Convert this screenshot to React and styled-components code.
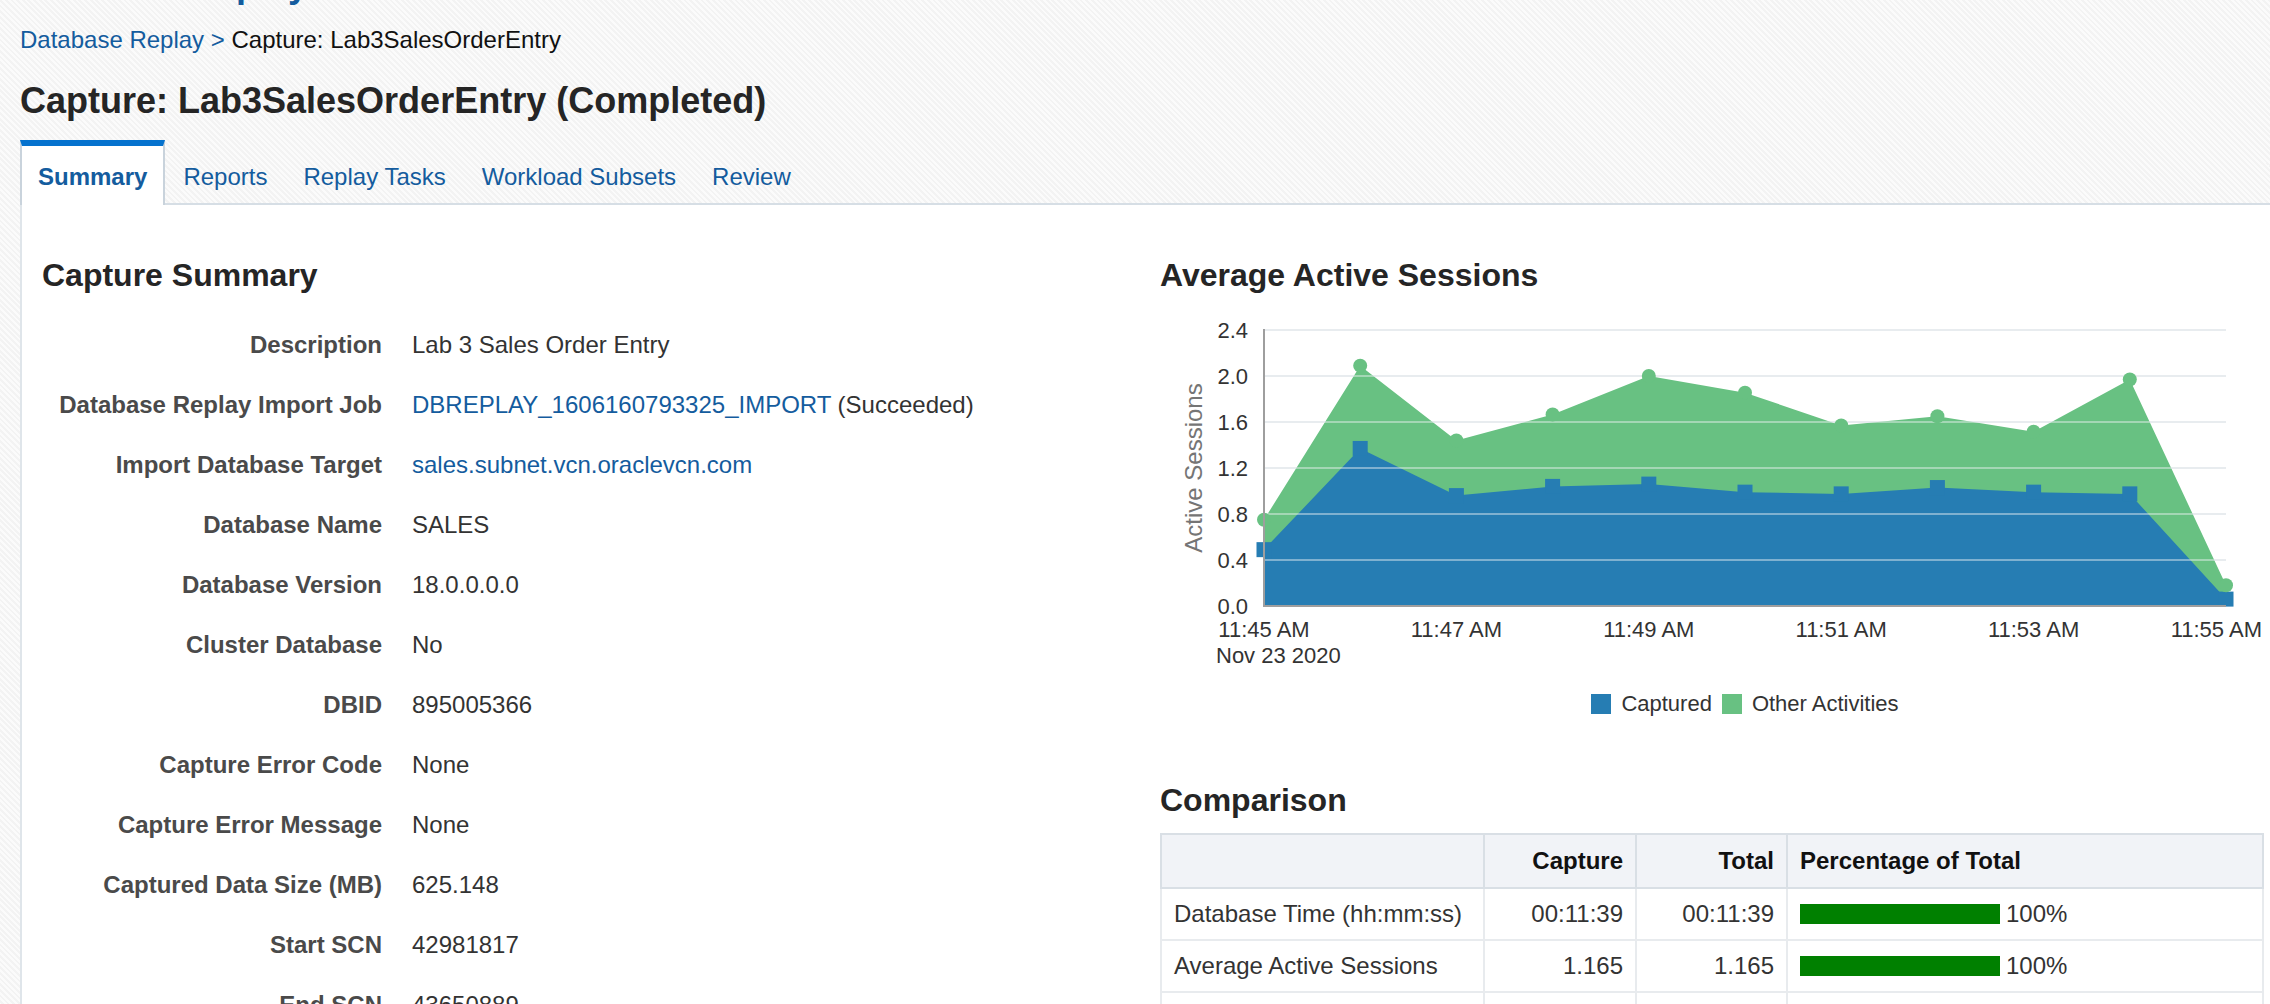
import React from 'react';
import styled, { createGlobalStyle } from 'styled-components';

const GlobalStyle = createGlobalStyle`
  html, body {
    margin: 0;
    padding: 0;
  }
  body {
    font-family: "Liberation Sans", Arial, Helvetica, sans-serif;
    color: #333;
    background-color: #f3f3f3;
    background-image: repeating-linear-gradient(45deg, rgba(255,255,255,0.7) 0 2px, transparent 2px 4px);
    overflow: hidden;
  }
`;

const Page = styled.div`
  padding-left: 20px;
  min-height: 1004px;
`;

const TopClip = styled.div`
  height: 6px;
  overflow: hidden;
`;

const ClippedHeading = styled.div`
  margin-top: -33px;
  font-size: 36px;
  line-height: 36px;
  font-weight: 700;
  color: #145c9e;
  white-space: nowrap;
`;

const Crumbs = styled.div`
  margin-top: 20px;
  font-size: 24px;
  line-height: 28px;
  color: #111;
`;

const CrumbLink = styled.span`
  color: #145c9e;
`;

const Title = styled.h1`
  margin: 25px 0 0;
  font-size: 36px;
  line-height: 44px;
  font-weight: 700;
  color: #252525;
`;

const TabBar = styled.div`
  display: flex;
  margin-top: 17px;
  border-bottom: 2px solid #d6dee5;
`;

const Tab = styled.div`
  font-size: 24px;
  line-height: 28px;
  color: #145c9e;
  font-weight: ${p => (p.$active ? 700 : 400)};
  background: ${p => (p.$active ? '#fff' : 'transparent')};
  border-top: 6px solid ${p => (p.$active ? '#0572ce' : 'transparent')};
  border-left: ${p => (p.$active ? '2px solid #c9d3dc' : 'none')};
  border-right: ${p => (p.$active ? '2px solid #c9d3dc' : 'none')};
  padding: 17px ${p => (p.$active ? '16px' : '18px')} ${p => (p.$active ? '14px' : '12px')};
  margin-bottom: ${p => (p.$active ? '-2px' : '0')};
`;

const Panel = styled.div`
  display: grid;
  grid-template-columns: 1118px 1104px;
  padding-left: 20px;
  background: #fff;
  border-left: 2px solid #dfe5ea;
  min-height: 800px;
`;

const Column = styled.div`
  display: flex;
  flex-direction: column;
`;

const SectionTitle = styled.h2`
  margin: ${p => p.$top || 50}px 0 0;
  font-size: 32px;
  line-height: 40px;
  font-weight: 700;
  color: #252525;
`;

const Props = styled.div`
  display: grid;
  grid-template-columns: 340px 1fr;
  column-gap: 30px;
  margin-top: 20px;
`;

const PropLabel = styled.div`
  text-align: right;
  font-size: 24px;
  line-height: 60px;
  font-weight: 700;
  color: #4a4a4a;
  white-space: nowrap;
`;

const PropValue = styled.div`
  font-size: 24px;
  line-height: 60px;
  color: #333;
  white-space: nowrap;
`;

const Link = styled.span`
  color: #145c9e;
`;

const ChartSvg = styled.svg`
  display: block;
  margin-top: 15px;
  font-family: "Liberation Sans", Arial, sans-serif;
`;

const Legend = styled.div`
  display: flex;
  justify-content: center;
  align-items: center;
  gap: 10px;
  margin-top: 20px;
  padding-left: 66px;
  font-size: 22px;
  line-height: 28px;
  color: #333;
`;

const LegendItem = styled.div`
  display: flex;
  align-items: center;
  gap: 10px;
`;

const Swatch = styled.span`
  width: 20px;
  height: 20px;
  background: ${p => p.$color};
`;

const Table = styled.table`
  margin-top: 13px;
  width: 1104px;
  border-collapse: collapse;
  border: 2px solid #d9dfe5;
  font-size: 24px;
  table-layout: fixed;
`;

const Th = styled.th`
  height: 52px;
  padding: ${p => (p.$align === 'left' ? '0 12px' : '0 12px 0 0')};
  text-align: ${p => p.$align || 'right'};
  font-weight: 700;
  color: #111;
  background: #f1f3f7;
  border: 2px solid #d9dfe5;
  white-space: nowrap;
`;

const Td = styled.td`
  height: 50px;
  padding: ${p => (p.$align === 'right' ? '0 12px 0 0' : '0 12px')};
  text-align: ${p => p.$align || 'left'};
  color: #333;
  border: 2px solid #e8ebee;
  white-space: nowrap;
`;

const BarCell = styled.div`
  display: flex;
  align-items: center;
  gap: 6px;
`;

const Bar = styled.span`
  display: inline-block;
  height: 20px;
  background: #008000;
`;

const summary = [
  ['Description', 'Lab 3 Sales Order Entry'],
  ['Database Replay Import Job', 'job'],
  ['Import Database Target', 'target'],
  ['Database Name', 'SALES'],
  ['Database Version', '18.0.0.0.0'],
  ['Cluster Database', 'No'],
  ['DBID', '895005366'],
  ['Capture Error Code', 'None'],
  ['Capture Error Message', 'None'],
  ['Captured Data Size (MB)', '625.148'],
  ['Start SCN', '42981817'],
  ['End SCN', '43650889'],
];

const renderValue = v => {
  if (v === 'job') {
    return (
      <>
        <Link>DBREPLAY_1606160793325_IMPORT</Link> (Succeeded)
      </>
    );
  }
  if (v === 'target') return <Link>sales.subnet.vcn.oraclevcn.com</Link>;
  return v;
};

const X0 = 104;
const X1 = 1066;
const YB = 296;
const PER = 115;
const xs = i => X0 + (i * (X1 - X0)) / 10;
const ys = v => YB - v * PER;

const captured = [0.49, 1.37, 0.96, 1.04, 1.06, 0.99, 0.975, 1.03, 0.99, 0.975, 0.06];
const total = [0.75, 2.09, 1.44, 1.665, 2.0, 1.855, 1.57, 1.65, 1.515, 1.97, 0.18];
const ticks = [0, 0.4, 0.8, 1.2, 1.6, 2.0, 2.4];
const times = ['11:45 AM', '11:47 AM', '11:49 AM', '11:51 AM', '11:53 AM', '11:55 AM'];

const areaPath = vals =>
  `M${xs(0)},${YB} ` + vals.map((v, i) => `L${xs(i)},${ys(v)}`).join(' ') + ` L${xs(10)},${YB} Z`;

function SessionsChart() {
  return (
    <ChartSvg width="1104" height="360" viewBox="0 0 1104 360">
      {ticks.map(t => (
        <line key={'g' + t} x1={X0} x2={X1} y1={ys(t)} y2={ys(t)} stroke="#e4e8ec" strokeWidth="2" />
      ))}
      <path d={areaPath(total)} fill="#68c182" />
      <path d={areaPath(captured)} fill="#267db3" />
      {ticks.slice(1).map(t => (
        <line key={'o' + t} x1={X0} x2={X1} y1={ys(t)} y2={ys(t)} stroke="#eef1f4" strokeOpacity="0.45" strokeWidth="2" />
      ))}
      {captured.map((v, i) => (
        <rect key={'s' + i} x={xs(i) - 7.5} y={ys(v) - 7.5} width="15" height="15" fill="#267db3" />
      ))}
      {total.map((v, i) => (
        <circle key={'c' + i} cx={xs(i)} cy={ys(v)} r="7" fill="#68c182" />
      ))}
      <line x1={X0} x2={X1} y1={YB} y2={YB} stroke="#9e9e9e" strokeWidth="2" />
      <line x1={X0} x2={X0} y1={ys(2.4) - 1} y2={YB + 1} stroke="#9e9e9e" strokeWidth="2" />
      {ticks.map(t => (
        <text key={'y' + t} x="88" y={ys(t)} textAnchor="end" dominantBaseline="central" fontSize="22" fill="#333">
          {t.toFixed(1)}
        </text>
      ))}
      <text
        x="33"
        y="158"
        transform="rotate(-90 33 158)"
        textAnchor="middle"
        dominantBaseline="central"
        fontSize="24"
        fill="#757575"
      >
        Active Sessions
      </text>
      {times.map((t, k) => {
        const last = k === times.length - 1;
        return (
          <text
            key={t}
            x={last ? 1102 : xs(k * 2)}
            y="319"
            textAnchor={last ? 'end' : 'middle'}
            dominantBaseline="central"
            fontSize="22"
            fill="#333"
          >
            {t}
          </text>
        );
      })}
      <text x="56" y="345" dominantBaseline="central" fontSize="22" fill="#333">
        Nov 23 2020
      </text>
    </ChartSvg>
  );
}

const comparison = [
  ['Database Time (hh:mm:ss)', '00:11:39', '00:11:39', 100],
  ['Average Active Sessions', '1.165', '1.165', 100],
  ['User Calls', '1,221,543', '1,221,543', 100],
];

export default function App() {
  return (
    <>
      <GlobalStyle />
      <Page>
        <TopClip>
          <ClippedHeading>Database Replay</ClippedHeading>
        </TopClip>
        <Crumbs>
          <CrumbLink>Database Replay &gt;</CrumbLink> Capture: Lab3SalesOrderEntry
        </Crumbs>
        <Title>Capture: Lab3SalesOrderEntry (Completed)</Title>
        <TabBar>
          <Tab $active>Summary</Tab>
          <Tab>Reports</Tab>
          <Tab>Replay Tasks</Tab>
          <Tab>Workload Subsets</Tab>
          <Tab>Review</Tab>
        </TabBar>
        <Panel>
          <Column>
            <SectionTitle>Capture Summary</SectionTitle>
            <Props>
              {summary.map(([label, value]) => (
                <React.Fragment key={label}>
                  <PropLabel>{label}</PropLabel>
                  <PropValue>{renderValue(value)}</PropValue>
                </React.Fragment>
              ))}
            </Props>
          </Column>
          <Column>
            <SectionTitle>Average Active Sessions</SectionTitle>
            <SessionsChart />
            <Legend>
              <LegendItem>
                <Swatch $color="#267db3" />
                Captured
              </LegendItem>
              <LegendItem>
                <Swatch $color="#68c182" />
                Other Activities
              </LegendItem>
            </Legend>
            <SectionTitle $top={62}>Comparison</SectionTitle>
            <Table>
              <colgroup>
                <col style={{ width: 323 }} />
                <col style={{ width: 152 }} />
                <col style={{ width: 151 }} />
                <col />
              </colgroup>
              <thead>
                <tr>
                  <Th />
                  <Th>Capture</Th>
                  <Th>Total</Th>
                  <Th $align="left">Percentage of Total</Th>
                </tr>
              </thead>
              <tbody>
                {comparison.map(([name, cap, tot, pct]) => (
                  <tr key={name}>
                    <Td>{name}</Td>
                    <Td $align="right">{cap}</Td>
                    <Td $align="right">{tot}</Td>
                    <Td>
                      <BarCell>
                        <Bar style={{ width: pct * 2 }} />
                        {pct}%
                      </BarCell>
                    </Td>
                  </tr>
                ))}
              </tbody>
            </Table>
          </Column>
        </Panel>
      </Page>
    </>
  );
}
